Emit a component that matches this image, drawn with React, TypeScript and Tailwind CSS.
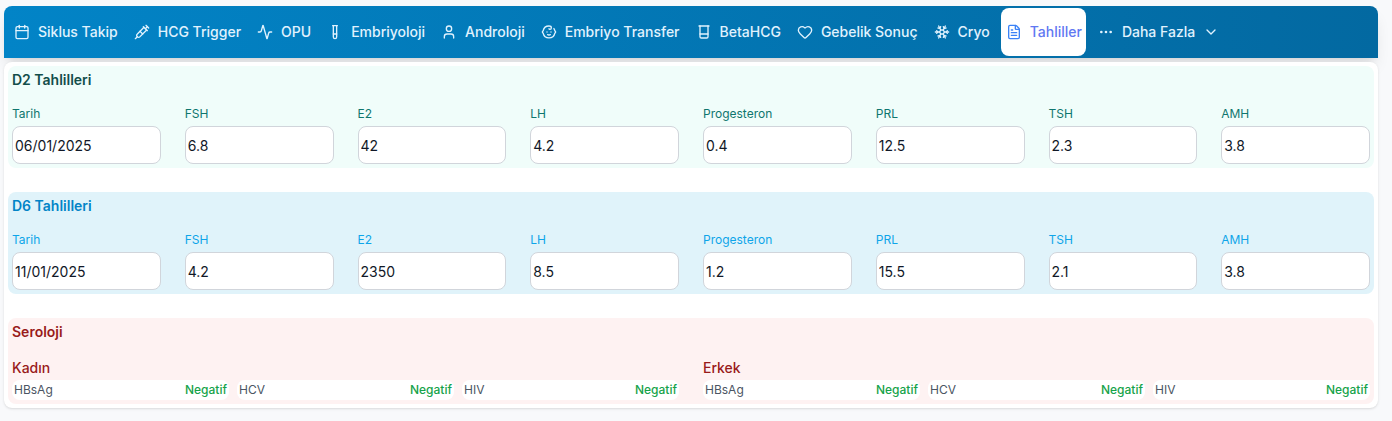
import {
  Activity,
  Baby,
  Calendar,
  ChevronDown,
  Ellipsis,
  FileText,
  Heart,
  Snowflake,
  Syringe,
  User,
} from 'lucide-react';
import type { ComponentType } from 'react';

type IconProps = { size?: number; strokeWidth?: number };

// lucide has no upright tube or plain beaker that matches, so these two are drawn by hand
function TubeIcon({ size = 16, strokeWidth = 2 }: IconProps) {
  return (
    <svg width={size} height={size} viewBox="0 0 24 24" fill="none" stroke="currentColor" strokeWidth={strokeWidth} strokeLinecap="round" strokeLinejoin="round">
      <path d="M8.5 2.5h7" />
      <path d="M9.5 2.5v17a2.5 2.5 0 0 0 5 0v-17" />
      <path d="M9.5 15h5" />
    </svg>
  );
}

function BeakerIcon({ size = 16, strokeWidth = 2 }: IconProps) {
  return (
    <svg width={size} height={size} viewBox="0 0 24 24" fill="none" stroke="currentColor" strokeWidth={strokeWidth} strokeLinecap="round" strokeLinejoin="round">
      <path d="M4.5 3h15" />
      <path d="M6 3v16a2 2 0 0 0 2 2h8a2 2 0 0 0 2-2V3" />
      <path d="M6 15h12" />
    </svg>
  );
}

const NAV: [string, ComponentType<IconProps>][] = [
  ['Siklus Takip', Calendar],
  ['HCG Trigger', Syringe],
  ['OPU', Activity],
  ['Embriyoloji', TubeIcon],
  ['Androloji', User],
  ['Embriyo Transfer', Baby],
  ['BetaHCG', BeakerIcon],
  ['Gebelik Sonuç', Heart],
  ['Cryo', Snowflake],
];

const FIELDS = ['Tarih', 'FSH', 'E2', 'LH', 'Progesteron', 'PRL', 'TSH', 'AMH'];

interface LabSectionProps {
  title: string;
  values: string[];
  boxClass: string;
  titleClass: string;
  labelClass: string;
}

function LabSection({ title, values, boxClass, titleClass, labelClass }: LabSectionProps) {
  return (
    <section className={`rounded-lg p-1 ${boxClass}`}>
      <h2 className={`text-sm leading-5 font-semibold ${titleClass}`}>{title}</h2>
      <div className="mt-4 grid grid-cols-8 gap-6">
        {FIELDS.map((label, i) => (
          <label key={label} className="block">
            <div className={`mb-1 text-xs leading-4 ${labelClass}`}>{label}</div>
            <input
              type="text"
              defaultValue={values[i]}
              className="block h-[38px] w-full rounded-lg border border-[#d1d5db] bg-white px-0.5 text-sm text-[#111827]"
            />
          </label>
        ))}
      </div>
    </section>
  );
}

function SerologyGroup({ title }: { title: string }) {
  return (
    <div>
      <div className="mb-0.5 text-sm leading-5 font-medium text-[#991b1b]">{title}</div>
      <div className="grid grid-cols-3 gap-2">
        {['HBsAg', 'HCV', 'HIV'].map((name) => (
          <div
            key={name}
            className="flex items-center justify-between rounded-lg bg-white px-0.5 py-0.5 text-xs leading-4"
          >
            <span className="text-[#4b5563]">{name}</span>
            <span className="font-medium text-[#16a34a]">Negatif</span>
          </div>
        ))}
      </div>
    </div>
  );
}

export default function App() {
  return (
    <div className="h-[421px] overflow-hidden bg-[#f8f9fb] pt-1.5 pr-3.5 pl-1 font-['Inter',sans-serif]">
      <nav className="flex h-[52px] items-center gap-2 rounded-t-lg bg-gradient-to-r from-[#0284c7] to-[#0369a1] px-1.5 shadow-lg">
        {NAV.map(([label, Icon]) => (
          <button
            key={label}
            type="button"
            className="flex h-12 items-center gap-2 px-1 text-sm font-medium whitespace-nowrap text-[#e0f2fe]"
          >
            <Icon size={16} strokeWidth={2} />
            {label}
          </button>
        ))}
        <button
          type="button"
          className="-ml-px flex h-12 items-center gap-2 rounded-lg bg-white pr-1 pl-[5px] text-sm font-medium whitespace-nowrap text-[#6178f2]"
        >
          <FileText size={16} strokeWidth={2} className="text-[#3b82f6]" />
          Tahliller
        </button>
        <button
          type="button"
          className="flex h-12 items-center gap-2 px-1 text-sm font-medium whitespace-nowrap text-[#e0f2fe]"
        >
          <Ellipsis size={16} strokeWidth={2} />
          Daha Fazla
          <ChevronDown size={16} strokeWidth={2} />
        </button>
      </nav>

      <main className="mt-1 flex h-[346px] flex-col gap-6 rounded-lg bg-white p-1 shadow-sm">
        <LabSection
          title="D2 Tahlilleri"
          values={['06/01/2025', '6.8', '42', '4.2', '0.4', '12.5', '2.3', '3.8']}
          boxClass="bg-[#f0fdfa]"
          titleClass="text-[#134e4a]"
          labelClass="text-[#0f766e]"
        />
        <LabSection
          title="D6 Tahlilleri"
          values={['11/01/2025', '4.2', '2350', '8.5', '1.2', '15.5', '2.1', '3.8']}
          boxClass="bg-[#e0f3fa]"
          titleClass="text-[#0284c7]"
          labelClass="text-[#0ea5e9]"
        />
        <section className="rounded-lg bg-[#fef2f2] p-1">
          <h2 className="text-sm leading-5 font-semibold text-[#991b1b]">Seroloji</h2>
          <div className="mt-4 grid grid-cols-2 gap-6">
            <SerologyGroup title="Kadın" />
            <SerologyGroup title="Erkek" />
          </div>
        </section>
      </main>
    </div>
  );
}
